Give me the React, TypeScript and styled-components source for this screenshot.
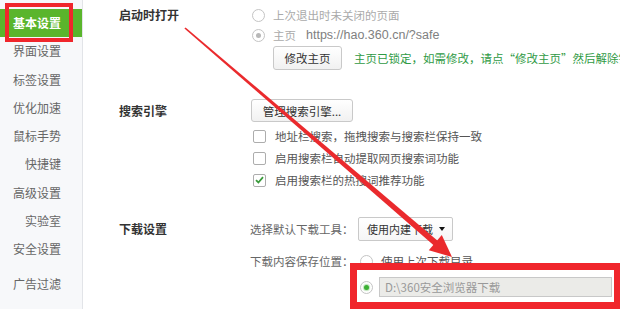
import React from 'react';
import styled, { createGlobalStyle } from 'styled-components';

const GlobalStyle = createGlobalStyle`
  html, body {
    margin: 0;
    padding: 0;
    background: #fff;
  }
  body {
    width: 620px;
    height: 309px;
    overflow: hidden;
    font-family: "Noto Sans CJK SC", "Liberation Sans", sans-serif;
    font-size: 12px;
    color: #555;
  }
`;

const Page = styled.div`
  position: relative;
  display: flex;
  width: 620px;
  height: 309px;
  overflow: hidden;
`;

const Sidebar = styled.nav`
  flex: 0 0 82px;
  display: flex;
  flex-direction: column;
  padding-top: 9px;
  background: #f7f8fa;
  border-right: 1px solid #e2e4e8;
`;

const NavItem = styled.div<{ $active?: boolean; $gap?: number }>`
  position: relative;
  height: 28.3px;
  line-height: 28px;
  margin-top: ${p => p.$gap ?? 0}px;
  padding-right: 21px;
  text-align: right;
  font-size: 12px;
  font-weight: ${p => (p.$active ? 700 : 400)};
  color: ${p => (p.$active ? '#fff' : '#666')};
  background: ${p => (p.$active ? '#5ab52c' : 'transparent')};
`;

// red annotation frame drawn over the active menu item
const MarkFrame = styled.span`
  position: absolute;
  left: 5px;
  top: -6px;
  width: 68px;
  height: 39px;
  box-sizing: border-box;
  border: 4px solid #f0262c;
`;

const Main = styled.main`
  flex: 1;
  display: flex;
  flex-direction: column;
  padding: 5px 0 0 36px;
  min-width: 0;
`;

const Section = styled.section<{ $top: number }>`
  display: flex;
  margin-top: ${p => p.$top}px;
`;

const Title = styled.div<{ $line: number }>`
  flex: 0 0 131px;
  line-height: ${p => p.$line}px;
  font-size: 12px;
  font-weight: 700;
  color: #333;
`;

const Body = styled.div`
  display: flex;
  flex-direction: column;
  white-space: nowrap;
  font-size: 11.5px;
`;

const Row = styled.div<{ $h: number; $top?: number; $indent?: number }>`
  display: flex;
  align-items: center;
  height: ${p => p.$h}px;
  margin-top: ${p => p.$top ?? 0}px;
  margin-left: ${p => p.$indent ?? 0}px;
`;

const Radio = styled.span<{ $checked?: boolean; $dot?: string }>`
  position: relative;
  flex: 0 0 13px;
  width: 13px;
  height: 13px;
  box-sizing: border-box;
  margin: 0 8px 0 2px;
  border: 1px solid #c4c4c4;
  border-radius: 50%;
  background: #fff;

  &::after {
    content: '';
    display: ${p => (p.$checked ? 'block' : 'none')};
    position: absolute;
    left: 3px;
    top: 3px;
    width: 5px;
    height: 5px;
    border-radius: 50%;
    background: ${p => p.$dot ?? '#b8b8b8'};
    box-shadow: 0 0 1px 1px ${p => (p.$dot ? 'rgba(60,176,52,0.35)' : 'transparent')};
  }
`;

const Faded = styled.span`
  color: #aaa;
`;

const Url = styled.span`
  margin-left: 10px;
  font-family: "Liberation Sans", Arial, sans-serif;
  font-size: 12.5px;
  color: #808080;
`;

const Button = styled.button<{ $w: number; $h: number; $left?: number }>`
  width: ${p => p.$w}px;
  height: ${p => p.$h}px;
  margin-left: ${p => p.$left ?? 0}px;
  padding: 0;
  border: 1px solid #c9c9c9;
  border-radius: 3px;
  background: linear-gradient(#ffffff, #f1f1f1);
  font-family: inherit;
  font-size: 11.5px;
  color: #333;
`;

const Notice = styled.span`
  margin-left: 12px;
  color: #2f9a45;
`;

const Check = styled.span`
  display: inline-flex;
  align-items: center;
  justify-content: center;
  flex: 0 0 13px;
  width: 13px;
  height: 13px;
  box-sizing: border-box;
  margin: 0 9px 0 3px;
  border: 1px solid #adadad;
  border-radius: 2px;
  background: #fff;
`;

const FieldLabel = styled.span`
  flex: 0 0 108px;
  color: #666;
`;

const Select = styled.div`
  display: flex;
  align-items: center;
  gap: 6px;
  width: 95px;
  height: 24px;
  box-sizing: border-box;
  padding: 0 0 0 8px;
  border: 1px solid #c9c9c9;
  border-radius: 2px;
  background: linear-gradient(#ffffff, #f6f6f6);
  font-size: 11px;
  color: #333;
`;

const Caret = styled.span`
  width: 0;
  height: 0;
  border-left: 3.5px solid transparent;
  border-right: 3.5px solid transparent;
  border-top: 4px solid #111;
`;

const PathInput = styled.div`
  width: 233px;
  height: 20px;
  box-sizing: border-box;
  margin-left: -2px;
  padding-left: 5px;
  line-height: 18px;
  border: 1px solid #c8c8c8;
  background: #ebebe8;
  color: #999;
`;

// annotation layers sit over the settings page
const RedFrame = styled.div`
  position: absolute;
  left: 350px;
  top: 263px;
  width: 270px;
  height: 46px;
  box-sizing: border-box;
  border: 7px solid #f0262c;
  border-right-width: 6px;
  pointer-events: none;
`;

const ArrowLayer = styled.svg`
  position: absolute;
  left: 0;
  top: 0;
  pointer-events: none;
`;

const menu = ['界面设置', '标签设置', '优化加速', '鼠标手势', '快捷键', '高级设置', '实验室', '安全设置'];

const searchOptions = [
  { label: '地址栏搜索，拖拽搜索与搜索栏保持一致', checked: false },
  { label: '启用搜索栏自动提取网页搜索词功能', checked: false },
  { label: '启用搜索栏的热搜词推荐功能', checked: true },
];

const Tick = () => (
  <svg width="9" height="8" viewBox="0 0 9 8">
    <path d="M1 4.2 L3.4 6.5 L8 1.2" fill="none" stroke="#3a9a3c" strokeWidth="1.8" />
  </svg>
);

const App: React.FC = () => {
  return (
    <>
      <GlobalStyle />
      <Page>
        <Sidebar>
          <NavItem $active>
            基本设置
            <MarkFrame />
          </NavItem>
          {menu.map(item => (
            <NavItem key={item}>{item}</NavItem>
          ))}
          <NavItem $gap={6}>广告过滤</NavItem>
        </Sidebar>

        <Main>
          <Section $top={0}>
            <Title $line={20}>启动时打开</Title>
            <Body>
              <Row $h={20}>
                <Radio />
                <Faded>上次退出时未关闭的页面</Faded>
              </Row>
              <Row $h={20}>
                <Radio $checked />
                <Faded>主页</Faded>
                <Url>https://hao.360.cn/?safe</Url>
              </Row>
              <Row $h={24} $top={1}>
                <Button $w={69} $h={24} $left={23}>修改主页</Button>
                <Notice>主页已锁定，如需修改，请点“修改主页”然后解除锁</Notice>
              </Row>
            </Body>
          </Section>

          <Section $top={29}>
            <Title $line={23}>搜索引擎</Title>
            <Body>
              <Row $h={23}>
                <Button $w={102} $h={23} $left={1}>管理搜索引擎...</Button>
              </Row>
              {searchOptions.map((opt, i) => (
                <Row key={opt.label} $h={22} $top={i === 0 ? 3 : 0}>
                  <Check>{opt.checked && <Tick />}</Check>
                  <span>{opt.label}</span>
                </Row>
              ))}
            </Body>
          </Section>

          <Section $top={26}>
            <Title $line={24}>下载设置</Title>
            <Body>
              <Row $h={24}>
                <FieldLabel>选择默认下载工具：</FieldLabel>
                <Select>
                  使用内建下载
                  <Caret />
                </Select>
              </Row>
              <Row $h={20} $top={10}>
                <FieldLabel>下载内容保存位置：</FieldLabel>
                <Radio />
                <span>使用上次下载目录</span>
              </Row>
              <Row $h={20} $top={6} $indent={108}>
                <Radio $checked $dot="#3cb034" />
                <PathInput>D:\360安全浏览器下载</PathInput>
              </Row>
            </Body>
          </Section>
        </Main>

        <ArrowLayer width="620" height="309" viewBox="0 0 620 309">
          <polygon
            points="184.4,28.6 185.6,27.4 438.8,241.7 434.8,246.3"
            fill="#ea2a2d"
          />
          <polygon points="452,257 428.8,250.3 441.8,235.1" fill="#ea2a2d" />
        </ArrowLayer>
        <RedFrame />
      </Page>
    </>
  );
};

export default App;
